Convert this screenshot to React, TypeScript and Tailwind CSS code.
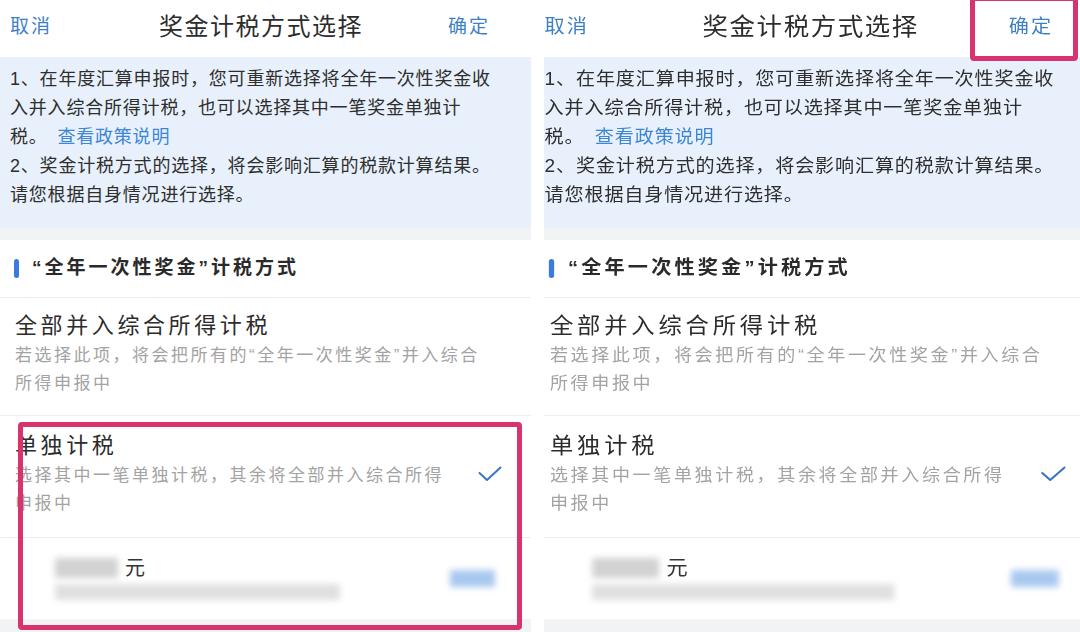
import React from "react";

const font = "font-['Liberation_Sans','Noto_Sans_CJK_SC',sans-serif]";

function Check() {
    return (
        <svg width="24" height="16" viewBox="0 0 24 16" fill="none">
            <polyline points="1.5,7 9,14 22.5,1.5" stroke="#3d74c4" strokeWidth="2" strokeLinecap="round" strokeLinejoin="round" />
        </svg>
    );
}

function Panel() {
    return (
        <div className={`w-[531px] h-[632px] bg-[#f2f3f5] ${font}`}>
            {/* header */}
            <div className="h-[57px] pb-[3px] bg-white flex items-center justify-between pl-[10px] pr-[41px]">
                <span className="text-[19px] tracking-[2px] text-[#3f7fc4]">取消</span>
                <span className="ml-[22px] text-[24px] tracking-[1.5px] text-[#2c2c2c]">奖金计税方式选择</span>
                <span className="text-[19px] tracking-[2px] text-[#3f7fc4]">确定</span>
            </div>

            {/* info */}
            <div className="bg-[#e8f1fb] pt-[8px] pb-[18px] px-[10px] text-[18px] leading-[29px] tracking-[0.8px] text-[#2e2e2e] whitespace-nowrap">
                1、在年度汇算申报时，您可重新选择将全年一次性奖金收
                <br />
                入并入综合所得计税，也可以选择其中一笔奖金单独计
                <br />
                税。 <span className="text-[#3d86d6] ml-[4px]">查看政策说明</span>
                <br />
                2、奖金计税方式的选择，将会影响汇算的税款计算结果。
                <br />
                请您根据自身情况进行选择。
            </div>

            <div className="h-[12px]" />

            {/* section title */}
            <div className="h-[58px] bg-white flex items-center pl-[14px] gap-[13px] border-b border-[#ededed]">
                <div className="w-[5px] h-[19px] rounded-full bg-[#3b7be0]" />
                <span className="text-[19px] tracking-[3px] font-bold text-[#2a2a2a]">“全年一次性奖金”计税方式</span>
            </div>

            {/* option 1 */}
            <div className="bg-white pl-[15px] pt-[12px] pb-[17px] border-b border-[#ededed]">
                <div className="text-[22px] leading-[32px] tracking-[3.6px] text-[#2c2c2c]">全部并入综合所得计税</div>
                <div className="text-[17px] leading-[28px] tracking-[2.5px] text-[#a3a3a3] whitespace-nowrap">
                    若选择此项，将会把所有的“全年一次性奖金”并入综合
                    <br />
                    所得申报中
                </div>
            </div>

            {/* option 2 */}
            <div className="bg-white pl-[15px] pr-[29px] pt-[14px] pb-[19px] border-b border-[#ededed] flex items-center">
                <div className="flex-1">
                    <div className="text-[22px] leading-[32px] tracking-[3.6px] text-[#2c2c2c]">单独计税</div>
                    <div className="text-[17px] leading-[28px] tracking-[2.5px] text-[#a3a3a3] whitespace-nowrap">
                        选择其中一笔单独计税，其余将全部并入综合所得
                        <br />
                        申报中
                    </div>
                </div>
                <Check />
            </div>

            {/* blurred bonus entry */}
            <div className="h-[81px] bg-white flex items-center pl-[55px] pr-[36px]">
                <div className="flex-1 flex flex-col gap-[5px]">
                    <div className="flex items-center gap-[7px]">
                        <div className="w-[63px] h-[20px] bg-[#d2d2d2] blur-[3px]" />
                        <span className="text-[20px] leading-[22px] text-[#333]">元</span>
                    </div>
                    <div className="w-[285px] h-[16px] bg-[#e0e0e0] blur-[3px]" />
                </div>
                <div className="w-[45px] h-[17px] bg-[#a9c8ef] blur-[3px]" />
            </div>
        </div>
    );
}

export default function App() {
    return (
        <div className="relative w-[1080px] h-[632px] bg-white flex overflow-hidden">
            <div className="w-[531px] shrink-0">
                <Panel />
            </div>
            <div className="w-[13px] shrink-0" />
            <div className="w-[536px] shrink-0 overflow-hidden">
                <div className="w-[531px] -ml-[10px] origin-left scale-x-[1.06]">
                    <Panel />
                </div>
            </div>

            {/* highlight boxes */}
            <div className="absolute left-[18px] top-[422px] w-[504px] h-[208px] border-[5px] border-[#d8336f] rounded-[4px]" />
            <div className="absolute left-[970px] top-[-4px] w-[108px] h-[65px] border-[5px] border-[#d8336f] rounded-[4px]" />
        </div>
    );
}
